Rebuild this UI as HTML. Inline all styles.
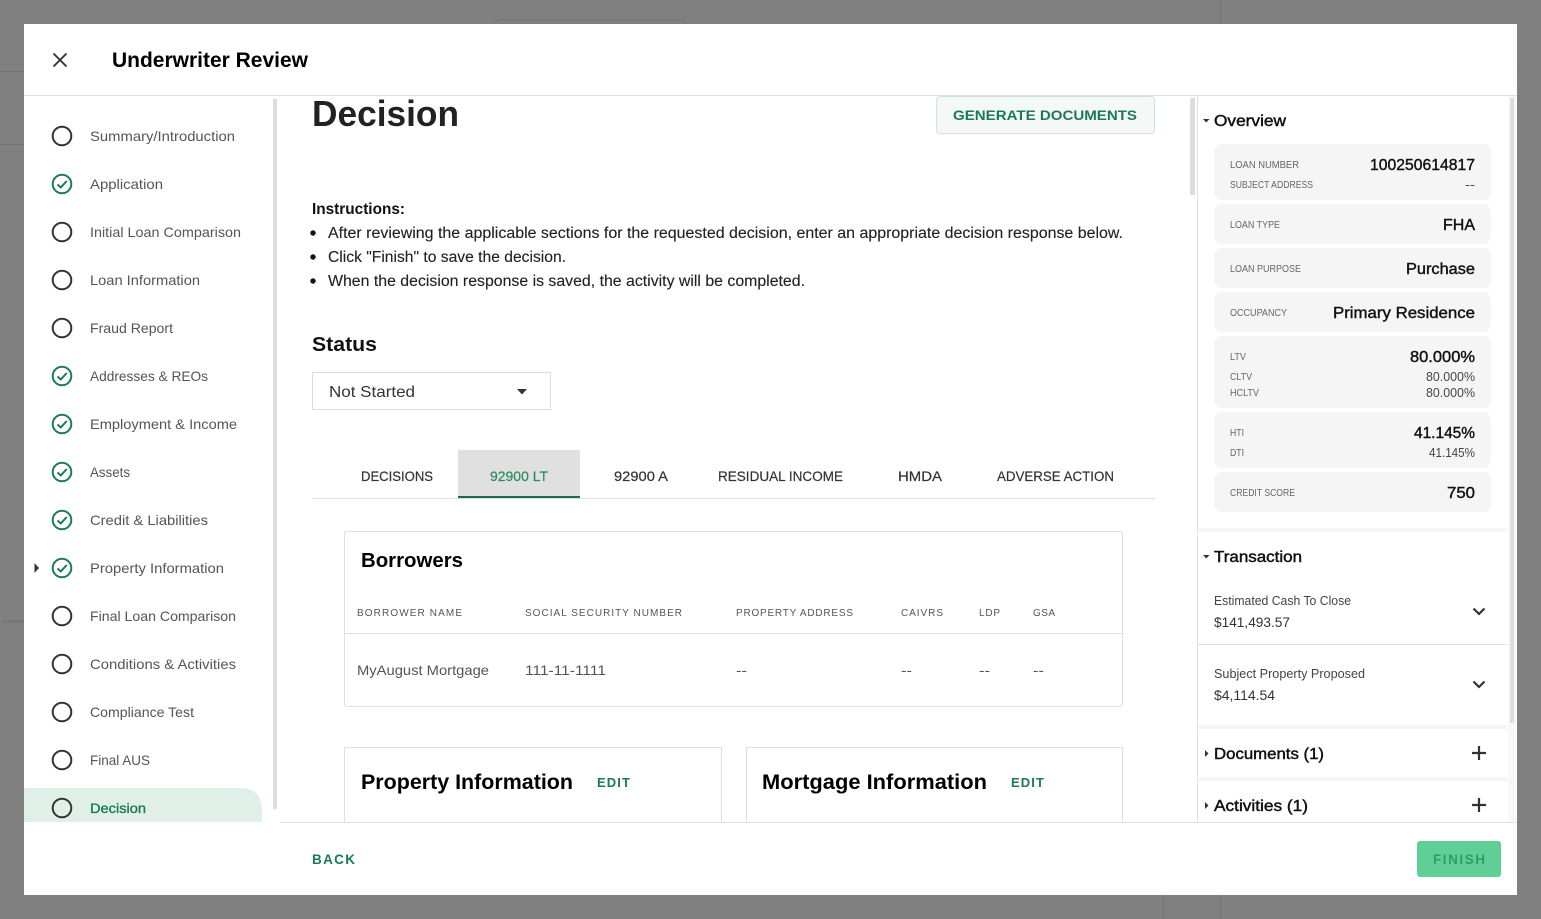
<!DOCTYPE html>
<html lang="en"><head><meta charset="utf-8"><title>Underwriter Review</title>
<style>
html,body{margin:0;padding:0;background:#808080;width:1541px;height:919px;overflow:hidden}
svg{display:block;position:absolute;left:0;top:0}
text{font-family:"Liberation Sans",Arial,sans-serif;white-space:pre}
.nav{font-size:14px;fill:#555}
.h{font-weight:700;fill:#000}
.b{font-size:15.5px;fill:#222;stroke:#222;stroke-width:.12}
.tab{font-size:14px;fill:#333;stroke:#333;stroke-width:.2}
.th{font-size:10px;fill:#555}
.td{font-size:14px;fill:#555}
.lab{font-size:10px;fill:#666}
.val{font-size:15.5px;fill:#111;stroke:#111;stroke-width:.4}
.sm{font-size:12.5px;fill:#444}
.sec{font-size:15.5px;fill:#111;stroke:#111;stroke-width:.45}
.g{fill:#1a7a55;font-weight:700}
.circ{fill:none;stroke:#333;stroke-width:2}
.chk{fill:none;stroke:#1a7a5a;stroke-width:2}
.line{fill:none;stroke:#e0e0e0;stroke-width:1}
.ic{fill:none;stroke:#333;stroke-width:2.2}
</style></head>
<body>
<svg width="1541" height="919" viewBox="0 0 1541 919" xmlns="http://www.w3.org/2000/svg">
<!-- dimmed background -->
<rect width="1541" height="919" fill="#808080"/>
<path d="M0 71.5H24M0 144.5H24M495 24V23Q495 20 500 20H680Q685 20 685 23V24M1220.5 0V24M1163.5 895V919M1220.5 895V919" fill="none" stroke="#747474"/>
<path d="M1517 71.5H1541M1517 135.5H1541" fill="none" stroke="#7b7b7b"/>
<rect x="2" y="620" width="22" height="3" fill="#777"/>
<!-- modal -->
<rect x="24" y="24" width="1493" height="871" fill="#fff"/>
<path class="line" d="M24 95.500H1517"/>
<path d="M53.500 53.500L66.500 66.500M66.500 53.500L53.500 66.500" fill="none" stroke="#333" stroke-width="1.900"/>
<text x="112" y="67" class="h" font-size="21" textLength="196" lengthAdjust="spacingAndGlyphs">Underwriter Review</text>

<!-- sidebar -->
<rect x="273" y="99" width="4" height="710" fill="#ddd"/>
<path d="M24 788H240Q262 788 262 810V822H24Z" fill="#e0f0e9"/>
<g class="circ">
<circle cx="62" cy="136" r="9.300"/><circle cx="62" cy="232" r="9.300"/><circle cx="62" cy="280" r="9.300"/><circle cx="62" cy="328" r="9.300"/><circle cx="62" cy="616" r="9.300"/><circle cx="62" cy="664" r="9.300"/><circle cx="62" cy="712" r="9.300"/><circle cx="62" cy="760" r="9.300"/><circle cx="62" cy="808" r="9.300"/>
</g>
<g class="chk">
<circle cx="62" cy="184" r="9.300"/><path d="M57.500 184.500L60.800 187.500L66.700 181"/>
<circle cx="62" cy="376" r="9.300"/><path d="M57.500 376.500L60.800 379.500L66.700 373"/>
<circle cx="62" cy="424" r="9.300"/><path d="M57.500 424.500L60.800 427.500L66.700 421"/>
<circle cx="62" cy="472" r="9.300"/><path d="M57.500 472.500L60.800 475.500L66.700 469"/>
<circle cx="62" cy="520" r="9.300"/><path d="M57.500 520.500L60.800 523.500L66.700 517"/>
<circle cx="62" cy="568" r="9.300"/><path d="M57.500 568.500L60.800 571.500L66.700 565"/>
</g>
<path d="M34.500 563L39 568L34.500 573Z" fill="#333"/>
<text x="90" y="141" class="nav" textLength="145" lengthAdjust="spacingAndGlyphs">Summary/Introduction</text>
<text x="90" y="189" class="nav" textLength="73" lengthAdjust="spacingAndGlyphs">Application</text>
<text x="90" y="237" class="nav" textLength="151" lengthAdjust="spacingAndGlyphs">Initial Loan Comparison</text>
<text x="90" y="285" class="nav" textLength="110" lengthAdjust="spacingAndGlyphs">Loan Information</text>
<text x="90" y="333" class="nav" textLength="83" lengthAdjust="spacingAndGlyphs">Fraud Report</text>
<text x="90" y="381" class="nav" textLength="118" lengthAdjust="spacingAndGlyphs">Addresses &amp; REOs</text>
<text x="90" y="429" class="nav" textLength="147" lengthAdjust="spacingAndGlyphs">Employment &amp; Income</text>
<text x="90" y="477" class="nav" textLength="40" lengthAdjust="spacingAndGlyphs">Assets</text>
<text x="90" y="525" class="nav" textLength="118" lengthAdjust="spacingAndGlyphs">Credit &amp; Liabilities</text>
<text x="90" y="573" class="nav" textLength="134" lengthAdjust="spacingAndGlyphs">Property Information</text>
<text x="90" y="621" class="nav" textLength="146" lengthAdjust="spacingAndGlyphs">Final Loan Comparison</text>
<text x="90" y="669" class="nav" textLength="146" lengthAdjust="spacingAndGlyphs">Conditions &amp; Activities</text>
<text x="90" y="717" class="nav" textLength="104" lengthAdjust="spacingAndGlyphs">Compliance Test</text>
<text x="90" y="765" class="nav" textLength="60" lengthAdjust="spacingAndGlyphs">Final AUS</text>
<text x="90" y="813" class="nav" style="fill:#1a7a55;stroke:#1a7a55;stroke-width:.35" textLength="56" lengthAdjust="spacingAndGlyphs">Decision</text>
<rect x="24" y="822" width="256" height="73" fill="#fff"/>

<!-- main -->
<text x="312" y="126" class="h" style="fill:#222" font-size="36" textLength="147" lengthAdjust="spacingAndGlyphs">Decision</text>
<rect x="936.500" y="96.500" width="218" height="37" rx="3" fill="#f4f9f7" stroke="#d5e0dc"/>
<text x="953" y="120" class="g" font-size="13.500" textLength="184" lengthAdjust="spacingAndGlyphs">GENERATE DOCUMENTS</text>
<text x="312" y="214" class="b" style="font-weight:700;fill:#111;stroke:none" textLength="93" lengthAdjust="spacingAndGlyphs">Instructions:</text>
<circle cx="313" cy="233" r="2.700" fill="#111"/><circle cx="313" cy="257" r="2.700" fill="#111"/><circle cx="313" cy="281" r="2.700" fill="#111"/>
<text x="328" y="238" class="b" textLength="795" lengthAdjust="spacingAndGlyphs">After reviewing the applicable sections for the requested decision, enter an appropriate decision response below.</text>
<text x="328" y="262" class="b" textLength="238" lengthAdjust="spacingAndGlyphs">Click "Finish" to save the decision.</text>
<text x="328" y="286" class="b" textLength="477" lengthAdjust="spacingAndGlyphs">When the decision response is saved, the activity will be completed.</text>
<text x="312" y="351" class="h" style="fill:#111" font-size="20" textLength="65" lengthAdjust="spacingAndGlyphs">Status</text>
<rect x="312.500" y="372.500" width="238" height="37" fill="#fff" stroke="#ddd"/>
<text x="329" y="397" font-size="16" fill="#333" textLength="86" lengthAdjust="spacingAndGlyphs">Not Started</text>
<path d="M517 389H527L522 394.500Z" fill="#333"/>

<!-- tabs -->
<rect x="458" y="450" width="122" height="48" fill="#e0e0e0"/>
<path class="line" d="M312 498.500H1155"/>
<rect x="458" y="496" width="122" height="2" fill="#1a6b4e"/>
<text x="361" y="481" class="tab" textLength="72" lengthAdjust="spacingAndGlyphs">DECISIONS</text>
<text x="490" y="481" class="tab" style="fill:#2a8a62;stroke:#2a8a62" textLength="58" lengthAdjust="spacingAndGlyphs">92900 LT</text>
<text x="614" y="481" class="tab" textLength="54" lengthAdjust="spacingAndGlyphs">92900 A</text>
<text x="718" y="481" class="tab" textLength="125" lengthAdjust="spacingAndGlyphs">RESIDUAL INCOME</text>
<text x="898" y="481" class="tab" textLength="44" lengthAdjust="spacingAndGlyphs">HMDA</text>
<text x="997" y="481" class="tab" textLength="117" lengthAdjust="spacingAndGlyphs">ADVERSE ACTION</text>

<!-- borrowers -->
<rect x="344.500" y="531.500" width="778" height="175" rx="2" fill="#fff" stroke="#e0e0e0"/>
<text x="361" y="567" class="h" font-size="20" textLength="102" lengthAdjust="spacingAndGlyphs">Borrowers</text>
<text x="357" y="616" class="th" textLength="105" lengthAdjust="spacing">BORROWER NAME</text>
<text x="525" y="616" class="th" textLength="157" lengthAdjust="spacing">SOCIAL SECURITY NUMBER</text>
<text x="736" y="616" class="th" textLength="117" lengthAdjust="spacing">PROPERTY ADDRESS</text>
<text x="901" y="616" class="th" textLength="42" lengthAdjust="spacing">CAIVRS</text>
<text x="979" y="616" class="th" textLength="21" lengthAdjust="spacing">LDP</text>
<text x="1033" y="616" class="th" textLength="22" lengthAdjust="spacing">GSA</text>
<path class="line" d="M345 633.500H1122"/>
<text x="357" y="675" class="td" textLength="132" lengthAdjust="spacingAndGlyphs">MyAugust Mortgage</text>
<text x="525" y="675" class="td" textLength="81" lengthAdjust="spacingAndGlyphs">111-11-1111</text>
<text x="736" y="675" class="td" textLength="11" lengthAdjust="spacingAndGlyphs">--</text>
<text x="901" y="675" class="td" textLength="11" lengthAdjust="spacingAndGlyphs">--</text>
<text x="979" y="675" class="td" textLength="11" lengthAdjust="spacingAndGlyphs">--</text>
<text x="1033" y="675" class="td" textLength="11" lengthAdjust="spacingAndGlyphs">--</text>

<!-- lower cards -->
<path class="line" d="M344.500 822V747.500H721.500V822M746.500 822V747.500H1122.500V822"/>
<text x="361" y="789" class="h" font-size="21.500" textLength="212" lengthAdjust="spacingAndGlyphs">Property Information</text>
<text x="597" y="787" class="g" font-size="13" textLength="33" lengthAdjust="spacing">EDIT</text>
<text x="762" y="789" class="h" font-size="21.500" textLength="225" lengthAdjust="spacingAndGlyphs">Mortgage Information</text>
<text x="1011" y="787" class="g" font-size="13" textLength="33" lengthAdjust="spacing">EDIT</text>

<rect x="1190" y="98" width="5" height="97" fill="#ddd"/>
<path class="line" d="M1197.500 96V822"/>

<!-- right panel -->
<rect x="1508" y="96" width="8" height="726" fill="#f8f8f8"/>
<rect x="1510" y="98" width="4" height="625" fill="#ddd"/>
<path d="M1203 119H1209.500L1206.250 122.500Z" fill="#333"/>
<text x="1214" y="126" class="sec" textLength="72" lengthAdjust="spacingAndGlyphs">Overview</text>
<g fill="#f5f5f5">
<rect x="1214" y="144" width="277" height="56" rx="8"/>
<rect x="1214" y="204" width="277" height="40" rx="8"/>
<rect x="1214" y="248" width="277" height="40" rx="8"/>
<rect x="1214" y="292" width="277" height="40" rx="8"/>
<rect x="1214" y="336" width="277" height="72" rx="8"/>
<rect x="1214" y="412" width="277" height="56" rx="8"/>
<rect x="1214" y="472" width="277" height="40" rx="8"/>
</g>
<text x="1230" y="168" class="lab" textLength="69" lengthAdjust="spacingAndGlyphs">LOAN NUMBER</text>
<text x="1230" y="188" class="lab" textLength="83" lengthAdjust="spacingAndGlyphs">SUBJECT ADDRESS</text>
<text x="1370" y="170" class="val" textLength="105" lengthAdjust="spacingAndGlyphs">100250614817</text>
<text x="1465" y="189" class="sm" textLength="10" lengthAdjust="spacingAndGlyphs">--</text>
<text x="1230" y="228" class="lab" textLength="50" lengthAdjust="spacingAndGlyphs">LOAN TYPE</text>
<text x="1443" y="230" class="val" textLength="32" lengthAdjust="spacingAndGlyphs">FHA</text>
<text x="1230" y="272" class="lab" textLength="71" lengthAdjust="spacingAndGlyphs">LOAN PURPOSE</text>
<text x="1406" y="274" class="val" textLength="69" lengthAdjust="spacingAndGlyphs">Purchase</text>
<text x="1230" y="316" class="lab" textLength="57" lengthAdjust="spacingAndGlyphs">OCCUPANCY</text>
<text x="1333" y="318" class="val" textLength="142" lengthAdjust="spacingAndGlyphs">Primary Residence</text>
<text x="1230" y="360" class="lab" textLength="16" lengthAdjust="spacingAndGlyphs">LTV</text>
<text x="1410" y="362" class="val" textLength="65" lengthAdjust="spacingAndGlyphs">80.000%</text>
<text x="1230" y="380" class="lab" textLength="22" lengthAdjust="spacingAndGlyphs">CLTV</text>
<text x="1426" y="381" class="sm" textLength="49" lengthAdjust="spacingAndGlyphs">80.000%</text>
<text x="1230" y="396" class="lab" textLength="29" lengthAdjust="spacingAndGlyphs">HCLTV</text>
<text x="1426" y="397" class="sm" textLength="49" lengthAdjust="spacingAndGlyphs">80.000%</text>
<text x="1230" y="436" class="lab" textLength="14" lengthAdjust="spacingAndGlyphs">HTI</text>
<text x="1414" y="438" class="val" textLength="61" lengthAdjust="spacingAndGlyphs">41.145%</text>
<text x="1230" y="456" class="lab" textLength="14" lengthAdjust="spacingAndGlyphs">DTI</text>
<text x="1429" y="457" class="sm" textLength="46" lengthAdjust="spacingAndGlyphs">41.145%</text>
<text x="1230" y="496" class="lab" textLength="65" lengthAdjust="spacingAndGlyphs">CREDIT SCORE</text>
<text x="1447" y="498" class="val" textLength="28" lengthAdjust="spacingAndGlyphs">750</text>

<rect x="1198" y="528" width="309" height="4" fill="#f5f5f5"/>
<path d="M1203 555H1209.500L1206.250 558.500Z" fill="#333"/>
<text x="1214" y="562" class="sec" textLength="88" lengthAdjust="spacingAndGlyphs">Transaction</text>
<text x="1214" y="605" class="sm" textLength="137" lengthAdjust="spacingAndGlyphs">Estimated Cash To Close</text>
<text x="1214" y="627" class="sm" style="font-size:13.500px;fill:#333" textLength="76" lengthAdjust="spacingAndGlyphs">$141,493.57</text>
<path class="ic" d="M1473.500 608.500L1479 614L1484.500 608.500"/>
<path class="line" d="M1198 644.500H1507"/>
<text x="1214" y="678" class="sm" textLength="151" lengthAdjust="spacingAndGlyphs">Subject Property Proposed</text>
<text x="1214" y="700" class="sm" style="font-size:13.500px;fill:#333" textLength="61" lengthAdjust="spacingAndGlyphs">$4,114.54</text>
<path class="ic" d="M1473.500 681.500L1479 687L1484.500 681.500"/>
<rect x="1198" y="725" width="309" height="4" fill="#f5f5f5"/>
<path d="M1205 750V757L1208.500 753.500Z" fill="#333"/>
<text x="1214" y="759" class="sec" textLength="110" lengthAdjust="spacingAndGlyphs">Documents (1)</text>
<path class="ic" d="M1472 753H1486M1479 746V760" stroke-width="1.800"/>
<rect x="1198" y="777" width="309" height="4" fill="#f5f5f5"/>
<path d="M1205 802V809L1208.500 805.500Z" fill="#333"/>
<text x="1214" y="811" class="sec" textLength="94" lengthAdjust="spacingAndGlyphs">Activities (1)</text>
<path class="ic" d="M1472 805H1486M1479 798V812" stroke-width="1.800"/>

<!-- footer -->
<rect x="280" y="822" width="1237" height="73" fill="#fff"/>
<path class="line" d="M280 822.500H1517"/>
<text x="312" y="864" class="g" font-size="13.500" textLength="43" lengthAdjust="spacing">BACK</text>
<rect x="1417" y="841" width="84" height="36" rx="3" fill="#5fcf95"/>
<text x="1433" y="864" font-size="13.500" font-weight="700" fill="#339a6b" textLength="52" lengthAdjust="spacing">FINISH</text>
</svg>
</body></html>
